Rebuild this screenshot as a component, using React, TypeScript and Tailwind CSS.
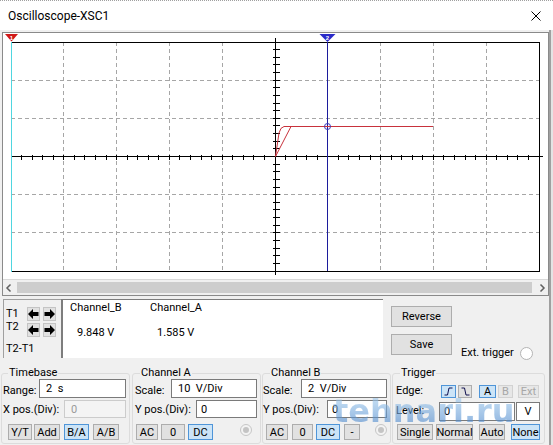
import React from "react";

type BP = { c: string; sel?: boolean; dis?: boolean; children?: React.ReactNode };

function Btn({ c, sel, dis, children }: BP) {
  const st = sel
    ? "bg-[#cce4f7] border-[#4f95d8] text-black"
    : dis
    ? "bg-[#e7e7e7] border-[#d2d2d2] text-[#a6a6a6]"
    : "bg-[#e1e1e1] border-[#adadad] text-black";
  return (
    <div className={`flex shrink-0 items-center justify-center border text-[11px] leading-none ${st} ${c}`}>
      {children}
    </div>
  );
}

function Box({ c, dis, children }: { c: string; dis?: boolean; children?: React.ReactNode }) {
  const st = dis ? "bg-[#f4f4f4] border-[#cccccc] text-[#9a9a9a]" : "bg-white border-[#7a7a7a] text-black";
  return (
    <div className={`flex shrink-0 items-center border text-[11px] leading-none whitespace-pre ${st} ${c}`}>
      {children}
    </div>
  );
}

function Arrow({ dir }: { dir: "l" | "r" }) {
  return (
    <div className="w-[13px] h-[14px] shrink-0 bg-[#e1e1e1] border border-[#c4c4c4] flex items-center justify-center">
      <svg width="11" height="10" viewBox="0 0 11 10">
        {dir === "l" ? (
          <polygon points="0,5 5,0 5,3 10.5,3 10.5,7 5,7 5,10" fill="#000" />
        ) : (
          <polygon points="11,5 6,0 6,3 0.5,3 0.5,7 6,7 6,10" fill="#000" />
        )}
      </svg>
    </div>
  );
}

function Radio({ c, dis }: { c: string; dis?: boolean }) {
  return dis ? (
    <div className={`w-[12px] h-[12px] shrink-0 rounded-full border border-[#c6c6c6] bg-[#f3f3f3] flex items-center justify-center ${c}`}>
      <div className="w-[6px] h-[6px] rounded-full bg-[#c4c4c4]" />
    </div>
  ) : (
    <div className={`w-[13px] h-[13px] shrink-0 rounded-full border border-[#b4b4b4] bg-white ${c}`} />
  );
}

function Plot() {
  const L = 8,
    R = 536,
    T = 9,
    B = 238;
  const dx = (R - L) / 10;
  const dy = (B - T) / 6;
  const cx = Math.floor(L + 5 * dx) + 0.5;
  const cy = Math.floor(T + 3 * dy) + 0.5;
  const c2 = Math.floor(L + 6 * dx) + 0.5;
  const vl = [1, 2, 3, 4, 6, 7, 8, 9].map((i) => Math.floor(L + i * dx) + 0.5);
  const hl = [1, 2, 4, 5].map((j) => Math.floor(T + j * dy) + 0.5);
  const xt: number[] = [];
  for (let i = 0; i <= 50; i++) xt.push(Math.floor(L + (i * dx) / 5) + 0.5);
  const yt: number[] = [];
  for (let j = 0; j <= 30; j++) yt.push(Math.floor(T + (j * dy) / 5) + 0.5);
  return (
    <svg width={545} height={246} className="block bg-white">
      <g shapeRendering="crispEdges">
        {vl.map((x) => (
          <line key={"v" + x} x1={x} x2={x} y1={T} y2={B} stroke="#a6a6a6" strokeDasharray="4 3" />
        ))}
        {hl.map((y) => (
          <line key={"h" + y} x1={L} x2={R} y1={y} y2={y} stroke="#a6a6a6" strokeDasharray="4 3" />
        ))}
        <rect x={L + 0.5} y={T + 0.5} width={R - L} height={B - T} fill="none" stroke="#000" />
        <line x1={L} x2={R + 4} y1={cy} y2={cy} stroke="#000" />
        <line x1={cx} x2={cx} y1={T - 4} y2={B + 4} stroke="#000" />
        {xt.map((x) => (
          <line key={"xt" + x} x1={x} x2={x} y1={cy - 2} y2={cy + 3} stroke="#000" />
        ))}
        {yt.map((y) => (
          <line key={"yt" + y} x1={cx - 3} x2={cx + 4} y1={y} y2={y} stroke="#000" />
        ))}
        <line x1={L + 0.5} x2={L + 0.5} y1={T} y2={B + 1} stroke="#4fd6e0" />
        <line x1={c2} x2={c2} y1={T} y2={B} stroke="#1c1c9c" />
      </g>
      <path d="M272.5 123.5 L276 100 Q277.5 94 281 93.5 L430 93.5" stroke="#c8323c" fill="none" />
      <path d="M272.5 123.5 L288 93.5" stroke="#c8323c" fill="none" />
      <circle cx={c2} cy={93.5} r={3} fill="none" stroke="#3a3ab8" />
      <polygon points="2,1 15,1 8.5,8.5" fill="#d01818" />
      <text x={8.5} y={6.5} fontSize="6" fill="#fff" textAnchor="middle" fontFamily="Liberation Sans, Arial, sans-serif" fontWeight="bold">
        1
      </text>
      <polygon points={`${c2 - 8},1 ${c2 + 8},1 ${c2},9`} fill="#2a2ac8" />
      <text x={c2} y={6.5} fontSize="6" fill="#fff" textAnchor="middle" fontFamily="Liberation Sans, Arial, sans-serif" fontWeight="bold">
        2
      </text>
    </svg>
  );
}

export default function App() {
  return (
    <div className="w-[553px] h-[445px] overflow-hidden relative flex flex-col bg-[#f0f0f0] text-black font-['Roboto','Liberation_Sans',Arial,sans-serif]">
      {/* Title bar */}
      <div className="h-[30px] shrink-0 bg-white border-t border-dotted border-[#a0a0a0] flex items-center justify-between pl-[8px] pr-[12px]">
        <span className="text-[12px] leading-none">Oscilloscope-XSC1</span>
        <svg width="10" height="10" viewBox="0 0 10 10">
          <path d="M0.5 0.5 L9.5 9.5 M9.5 0.5 L0.5 9.5" stroke="#000" strokeWidth="1" />
        </svg>
      </div>

      <div className="flex flex-1">
        <div className="w-[549px] shrink-0 flex flex-col">
          {/* Scope screen */}
          <div className="mt-[2px] ml-[2px] w-[547px] border border-[#8a8a8a] bg-[#f0f0f0]">
            <Plot />
            <div className="h-[16px] border-t border-[#d9d9d9] flex items-center">
              <svg width="12" height="16" viewBox="0 0 12 16">
                <path d="M7.5 4.5 L4 8 L7.5 11.5" stroke="#606060" strokeWidth="1.5" fill="none" />
              </svg>
              <div className="ml-[2px] w-[515px] h-[11px] bg-[#cdcdcd]" />
              <svg className="ml-auto" width="12" height="16" viewBox="0 0 12 16">
                <path d="M4.5 4.5 L8 8 L4.5 11.5" stroke="#606060" strokeWidth="1.5" fill="none" />
              </svg>
            </div>
          </div>

          {/* Cursor readout row */}
          <div className="flex mt-[3px] h-[59px]">
            <div className="ml-[3px] w-[58px] shrink-0 border-l border-t border-[#a0a0a0] flex flex-col">
              <div className="flex items-center mt-[7px] h-[14px]">
                <div className="w-[23px] pl-[2px] text-[11px] leading-[14px]">T1</div>
                <Arrow dir="l" />
                <div className="w-[3px]" />
                <Arrow dir="r" />
              </div>
              <div className="flex items-center mt-[2px] h-[14px]">
                <div className="w-[23px] pl-[2px] text-[11px] leading-[14px] mb-[6px]">T2</div>
                <Arrow dir="l" />
                <div className="w-[3px]" />
                <Arrow dir="r" />
              </div>
              <div className="mt-[5px] pl-[2px] text-[11px] leading-[14px]">T2-T1</div>
            </div>
            <div className="w-[322px] shrink-0 bg-white border-l-2 border-t border-[#7d7d7d] flex flex-col text-[11px] leading-[14px]">
              <div className="flex mt-[1px] pl-[7px]">
                <div className="w-[80px]">Channel_B</div>
                <div>Channel_A</div>
              </div>
              <div className="flex mt-[11px] pl-[14px]">
                <div className="w-[80px]">9.848 V</div>
                <div>1.585 V</div>
              </div>
            </div>
            <div className="ml-[8px] w-[61px] shrink-0 flex flex-col">
              <Btn c="mt-[7px] h-[21px] w-[61px]">Reverse</Btn>
              <Btn c="mt-[7px] h-[21px] w-[61px]">Save</Btn>
            </div>
            <div className="ml-[9px] mt-[47px] h-[14px] flex items-center">
              <span className="text-[11px] leading-[14px]">Ext. trigger</span>
              <Radio c="ml-[6px]" />
            </div>
          </div>

          {/* Group boxes */}
          <div className="flex mt-[8px]">
            <fieldset className="ml-[1px] w-[129px] h-[78px] shrink-0 border border-[#dcdcdc] rounded-[3px]">
              <legend className="ml-[6px] px-[1px] text-[11px] leading-[14px]">Timebase</legend>
              <div className="flex items-start -mt-[1px] h-[19px]">
                <div className="w-[37px] pl-[1px] mt-[5px] text-[11px] leading-[14px]">Range:</div>
                <Box c="w-[87px] h-[19px] pl-[6px]">{"2  s"}</Box>
              </div>
              <div className="flex items-start mt-[2px] h-[18px]">
                <div className="w-[62px] pl-[1px] mt-[3px] text-[11px] leading-[14px] whitespace-nowrap">X pos.(Div):</div>
                <Box dis c="w-[62px] h-[18px] pl-[6px]">0</Box>
              </div>
              <div className="flex mt-[6px] h-[16px]">
                <Btn c="ml-[6px] w-[24px] h-[16px]">Y/T</Btn>
                <Btn c="ml-[2px] w-[26px] h-[16px]">Add</Btn>
                <Btn sel c="ml-[4px] w-[25px] h-[16px]">B/A</Btn>
                <Btn c="ml-[4px] w-[26px] h-[16px]">A/B</Btn>
              </div>
            </fieldset>

            <fieldset className="ml-[2px] w-[129px] h-[78px] shrink-0 border border-[#dcdcdc] rounded-[3px]">
              <legend className="ml-[7px] px-[1px] text-[11px] leading-[14px]">Channel A</legend>
              <div className="flex items-start -mt-[1px] h-[19px]">
                <div className="w-[38px] pl-[2px] mt-[5px] text-[11px] leading-[14px]">Scale:</div>
                <Box c="w-[86px] h-[19px] pl-[6px]">{"10  V/Div"}</Box>
              </div>
              <div className="flex items-start mt-[2px] h-[18px]">
                <div className="w-[63px] pl-[2px] mt-[3px] text-[11px] leading-[14px] whitespace-nowrap">Y pos.(Div):</div>
                <Box c="w-[61px] h-[18px] pl-[4px]">0</Box>
              </div>
              <div className="flex mt-[6px] h-[16px]">
                <Btn c="ml-[3px] w-[22px] h-[16px]">AC</Btn>
                <Btn c="ml-[3px] w-[24px] h-[16px]">0</Btn>
                <Btn sel c="ml-[3px] w-[25px] h-[16px]">DC</Btn>
                <Radio dis c="ml-[27px]" />
              </div>
            </fieldset>

            <fieldset className="ml-[1px] w-[129px] h-[78px] shrink-0 border border-[#dcdcdc] rounded-[3px]">
              <legend className="ml-[7px] px-[1px] text-[11px] leading-[14px]">Channel B</legend>
              <div className="flex items-start -mt-[1px] h-[19px]">
                <div className="w-[38px] mt-[5px] text-[11px] leading-[14px]">Scale:</div>
                <Box c="w-[86px] h-[19px] pl-[6px]">{"2  V/Div"}</Box>
              </div>
              <div className="flex items-start mt-[2px] h-[18px]">
                <div className="w-[64px] mt-[3px] text-[11px] leading-[14px] whitespace-nowrap">Y pos.(Div):</div>
                <Box c="w-[60px] h-[18px] pl-[4px]">0</Box>
              </div>
              <div className="flex mt-[6px] h-[16px]">
                <Btn c="ml-[3px] w-[22px] h-[16px]">AC</Btn>
                <Btn c="ml-[4px] w-[21px] h-[16px]">0</Btn>
                <Btn sel c="ml-[3px] w-[24px] h-[16px]">DC</Btn>
                <Btn c="ml-[4px] w-[16px] h-[16px]">-</Btn>
                <Radio dis c="ml-[15px]" />
              </div>
            </fieldset>

            <fieldset className="ml-[1px] w-[153px] h-[78px] shrink-0 border border-[#dcdcdc] rounded-[3px]">
              <legend className="ml-[7px] px-[1px] text-[11px] leading-[14px]">Trigger</legend>
              <div className="flex items-start -mt-[1px] h-[19px]">
                <div className="w-[48px] pl-[3px] mt-[5px] text-[11px] leading-[14px]">Edge:</div>
                <Btn sel c="mt-[6px] w-[15px] h-[13px]">
                  <svg width="9" height="9" viewBox="0 0 9 9">
                    <path d="M0.5 8 H3.5 L5 1 H8.5" stroke="#101050" fill="none" strokeWidth="1" />
                  </svg>
                </Btn>
                <Btn c="ml-[2px] mt-[6px] w-[14px] h-[13px]">
                  <svg width="9" height="9" viewBox="0 0 9 9">
                    <path d="M0.5 1 H3.5 L5 8 H8.5" stroke="#101050" fill="none" strokeWidth="1" />
                  </svg>
                </Btn>
                <Btn sel c="ml-[7px] mt-[6px] w-[17px] h-[13px]">A</Btn>
                <Btn dis c="ml-[2px] mt-[6px] w-[15px] h-[13px]">B</Btn>
                <Btn dis c="ml-[5px] mt-[6px] w-[21px] h-[13px]">Ext</Btn>
              </div>
              <div className="flex items-start mt-[4px] h-[19px]">
                <div className="w-[46px] pl-[3px] mt-[2px] text-[11px] leading-[14px]">Level:</div>
                <Box c="w-[76px] h-[19px] pl-[4px]">0</Box>
                <Box c="ml-[1px] w-[24px] h-[19px] justify-center">V</Box>
              </div>
              <div className="flex mt-[3px] h-[16px]">
                <Btn c="ml-[4px] w-[36px] h-[16px]">Single</Btn>
                <Btn c="ml-[3px] w-[37px] h-[16px]">Normal</Btn>
                <Btn c="ml-[6px] w-[26px] h-[16px]">Auto</Btn>
                <Btn sel c="ml-[6px] w-[29px] h-[16px]">None</Btn>
              </div>
            </fieldset>
          </div>
        </div>
        <div className="w-[4px] shrink-0 border-l-2 border-[#a0a0a0] bg-[#e4e4e4]" />
      </div>

      {/* watermark */}
      <div className="absolute left-[333px] top-[395px] pointer-events-none text-[32px] leading-none font-bold font-['DejaVu_Sans',sans-serif] bg-gradient-to-b from-[#a8d0f0] to-[#3f7fc8] bg-clip-text text-transparent opacity-60">
        tehnari.ru
      </div>
    </div>
  );
}
